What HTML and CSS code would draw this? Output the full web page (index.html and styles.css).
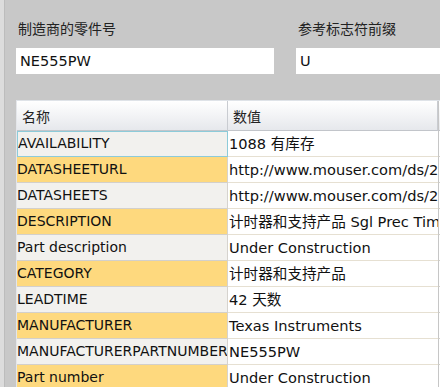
FILE: index.html
```html
<!DOCTYPE html>
<html>
<head>
<meta charset="utf-8">
<link rel="stylesheet" href="styles.css">
</head>
<body>
<div class="window">
  <div class="edge"></div>
  <div class="content">
    <div class="fields">
      <div class="field">
        <div class="label">制造商的零件号</div>
        <div class="input">NE555PW</div>
      </div>
      <div class="field wide">
        <div class="label">参考标志符前缀</div>
        <div class="input">U</div>
      </div>
    </div>
    <div class="grid">
      <div class="head">名称</div><div class="head">数值</div><div class="head extra"></div>
      <div class="name sel">AVAILABILITY</div><div class="val">1088 有库存</div><div class="extra"></div>
      <div class="name req">DATASHEETURL</div><div class="val">http://www.mouser.com/ds/2</div><div class="extra"></div>
      <div class="name">DATASHEETS</div><div class="val">http://www.mouser.com/ds/2</div><div class="extra"></div>
      <div class="name req">DESCRIPTION</div><div class="val">计时器和支持产品 Sgl Prec Time</div><div class="extra"></div>
      <div class="name">Part description</div><div class="val">Under Construction</div><div class="extra"></div>
      <div class="name req">CATEGORY</div><div class="val">计时器和支持产品</div><div class="extra"></div>
      <div class="name">LEADTIME</div><div class="val">42 天数</div><div class="extra"></div>
      <div class="name req">MANUFACTURER</div><div class="val">Texas Instruments</div><div class="extra"></div>
      <div class="name">MANUFACTURERPARTNUMBER</div><div class="val">NE555PW</div><div class="extra"></div>
      <div class="name req">Part number</div><div class="val">Under Construction</div><div class="extra"></div>
    </div>
  </div>
</div>
</body>
</html>
```
FILE: styles.css
```css
html, body {
  margin: 0;
  padding: 0;
}
body {
  width: 440px;
  height: 387px;
  overflow: hidden;
  background: #c8c8c8;
  font-family: "DejaVu Sans", Verdana, "Noto Sans CJK SC", sans-serif;
  color: #111;
}
.window {
  display: flex;
  height: 387px;
}
.edge {
  flex: none;
  width: 4px;
  background: #dcdcdc;
  border-right: 1px solid #bcbcbc;
}
.content {
  flex: 1;
  min-width: 0;
  padding: 19px 0 0 11px;
  overflow: hidden;
}
.fields {
  display: flex;
  gap: 22px;
  width: 480px;
}
.field {
  width: 258px;
  flex: none;
}
.field.wide {
  width: 200px;
}
.label {
  font-family: "Noto Sans CJK SC", sans-serif;
  font-size: 14px;
  line-height: 19px;
  color: #222;
  padding-left: 2px;
}
.input {
  margin-top: 10px;
  height: 26px;
  background: #fff;
  font-size: 14.5px;
  line-height: 26px;
  padding-left: 4px;
  box-sizing: border-box;
}
.grid {
  margin-top: 26px;
  display: grid;
  grid-template-columns: 211px 210px 30px;
  grid-template-rows: 30px;
  grid-auto-rows: 26px;
  width: 451px;
  border-top: 1px solid #dfe3e8;
  border-left: 1px solid #e4e6ea;
  box-sizing: border-box;
  font-size: 14.6px;
}
.grid > div {
  white-space: nowrap;
  overflow: hidden;
  line-height: 25px;
  box-sizing: border-box;
  border-bottom: 1px solid #d3d0cb;
}
.head {
  height: 30px;
  line-height: 30px !important;
  background: linear-gradient(#ffffff, #e6e8ec);
  border-right: 1px solid #c9ccd1;
  border-bottom: 1px solid #c2c5ca !important;
  font-family: "Noto Sans CJK SC", sans-serif;
  font-size: 14px;
  padding-left: 5px;
  color: #222;
}
.name {
  background: #f2f1ee;
  border-right: 1px solid #d6d3ce;
  padding-left: 0;
  font-size: 14px;
}
.name.req {
  background: #fed97e;
}
.name.sel {
  border: 1px solid #8dcbd9 !important;
  line-height: 23px !important;
}
.val {
  background: #fff;
  padding-left: 1px;
  border-bottom: 1px solid #e6e0d2 !important;
}
.extra {
  background: #fff;
  border-left: 1px solid #c6c6c6;
}
.head.extra {
  background: linear-gradient(#ffffff, #e6e8ec);
}
```
